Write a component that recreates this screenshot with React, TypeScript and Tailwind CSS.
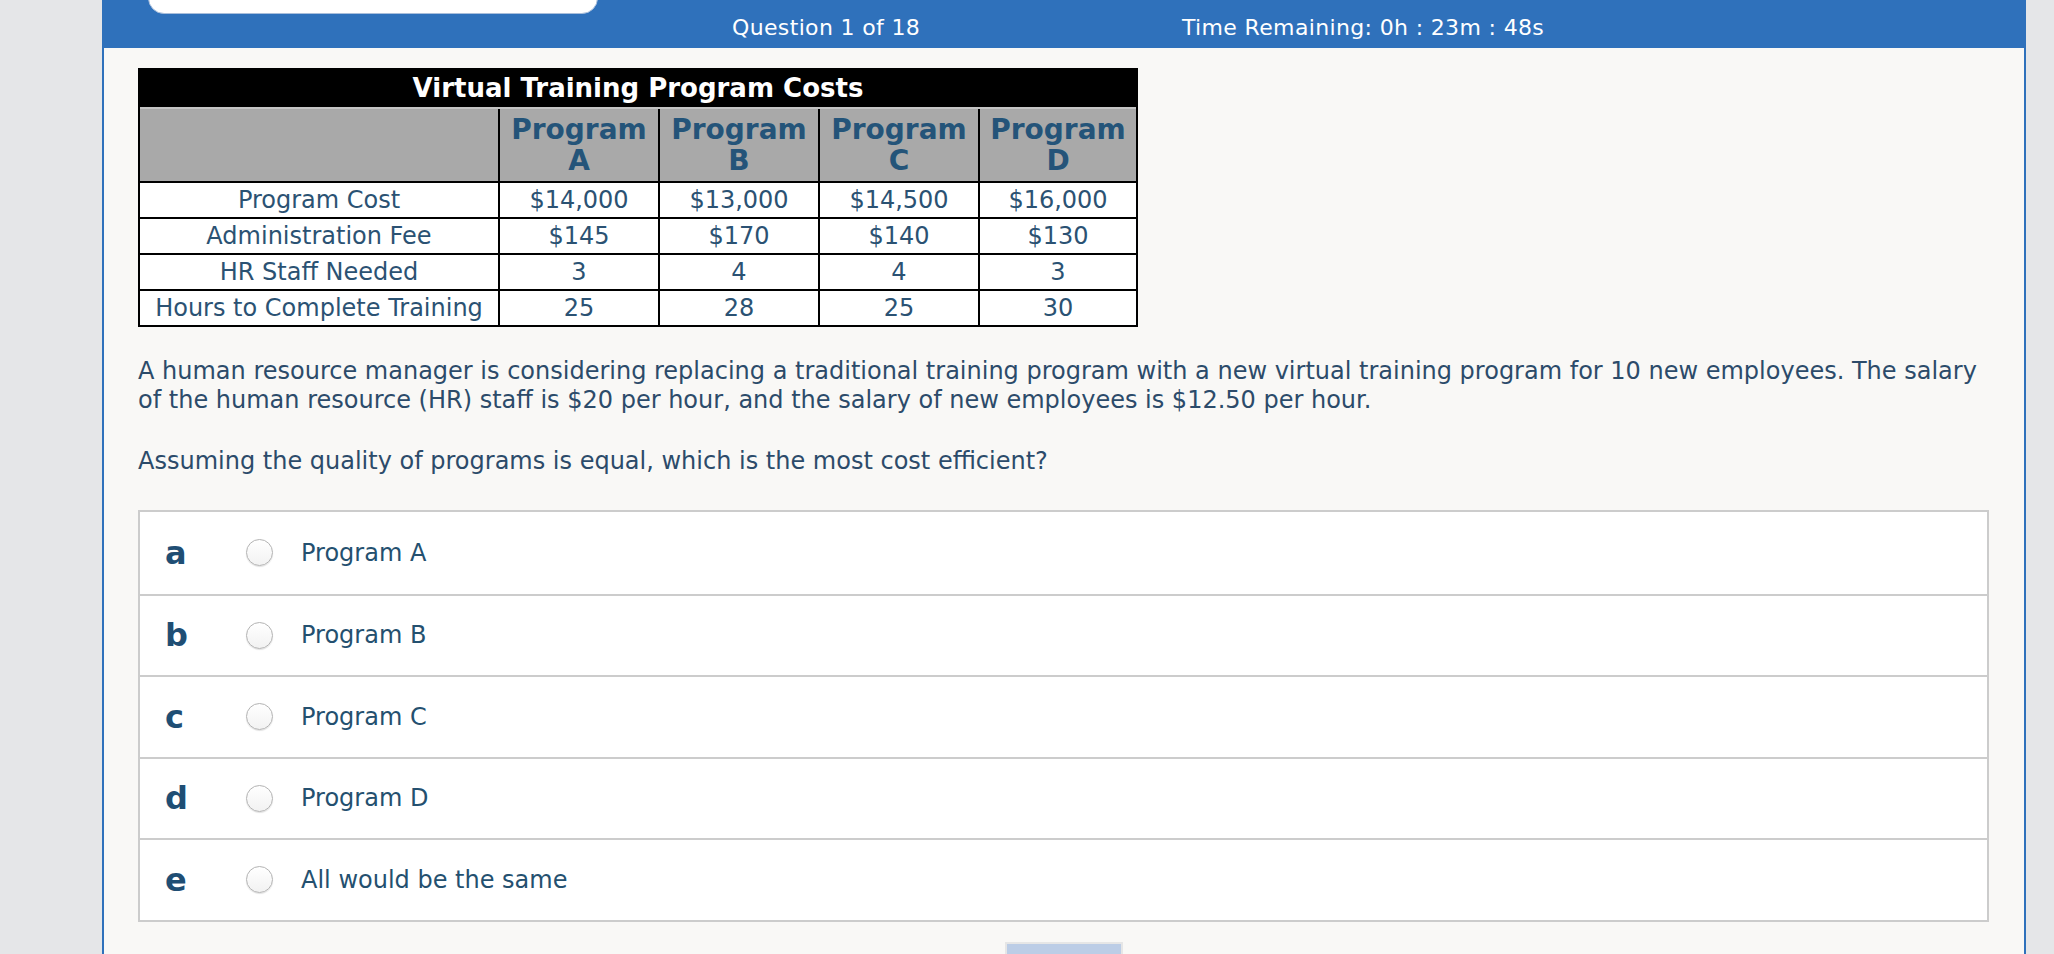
import { Fragment } from 'react';

const programs = ['A', 'B', 'C', 'D'];

const rows = [
    { label: 'Program Cost', values: ['$14,000', '$13,000', '$14,500', '$16,000'] },
    { label: 'Administration Fee', values: ['$145', '$170', '$140', '$130'] },
    { label: 'HR Staff Needed', values: ['3', '4', '4', '3'] },
    { label: 'Hours to Complete Training', values: ['25', '28', '25', '30'] },
];

const options = [
    { key: 'a', text: 'Program A' },
    { key: 'b', text: 'Program B' },
    { key: 'c', text: 'Program C' },
    { key: 'd', text: 'Program D' },
    { key: 'e', text: 'All would be the same' },
];

function CostTable() {
    return (
        <div className="w-[1000px] border-2 border-black bg-black">
            <div className="h-[37px] text-center text-[26px] font-bold leading-[37px] text-white">
                Virtual Training Program Costs
            </div>
            <div className="h-[2px] bg-[#c4c4c4]" />
            <div className="grid grid-cols-[358px_158px_158px_158px_156px] gap-[2px]">
                <div className="h-[72px] bg-[#a9a9a9]" />
                {programs.map((p) => (
                    <div
                        key={p}
                        className="flex h-[72px] flex-col items-center justify-center bg-[#a9a9a9] text-[28px] font-bold leading-[31px] text-[#245479]"
                    >
                        <span>Program</span>
                        <span>{p}</span>
                    </div>
                ))}
                {rows.map((row) => (
                    <Fragment key={row.label}>
                        <div className="h-[34px] bg-white text-center text-[24px] leading-[34px] text-[#2b5273]">
                            {row.label}
                        </div>
                        {row.values.map((v, i) => (
                            <div
                                key={i}
                                className="h-[34px] bg-white text-center text-[24px] leading-[34px] text-[#2b5273]"
                            >
                                {v}
                            </div>
                        ))}
                    </Fragment>
                ))}
            </div>
        </div>
    );
}

function Radio() {
    return (
        <div className="h-[27px] w-[27px] shrink-0 rounded-full border border-[#b3b3b3] bg-gradient-to-b from-white to-[#f2f2f2] shadow-[0_1px_1px_rgba(0,0,0,0.12)]" />
    );
}

export default function App() {
    return (
        <div className="flex h-[954px] w-[2054px] overflow-hidden bg-[#e5e6e8] font-['Verdana','DejaVu_Sans',sans-serif]">
            <div className="w-[102px] shrink-0" />

            <div className="flex w-[1924px] shrink-0 flex-col border-x-2 border-[#2f71bb] bg-[#f9f8f6]">
                {/* Top bar */}
                <div className="relative flex h-[48px] shrink-0 bg-[#2f71bb] pt-[15px] text-[22px] leading-[26px] tracking-[0.35px] text-white">
                    <div className="absolute left-[44px] top-[-26px] h-[40px] w-[450px] rounded-[16px] border border-[#a9bedb] bg-white" />
                    <span className="ml-[628px] w-[450px]">Question 1 of 18</span>
                    <span>Time Remaining: 0h : 23m : 48s</span>
                </div>

                {/* Question body */}
                <div className="flex flex-col pl-[34px] pr-[35px] pt-[20px]">
                    <CostTable />

                    <p className="mt-[30px] text-[24px] leading-[29px] text-[#2c4b6a]">
                        A human resource manager is considering replacing a traditional training program with a
                        new virtual training program for 10 new employees. The salary of the human resource (HR)
                        staff is $20 per hour, and the salary of new employees is $12.50 per hour.
                    </p>
                    <p className="mt-[32px] text-[24px] leading-[29px] text-[#2c4b6a]">
                        Assuming the quality of programs is equal, which is the most cost efficient?
                    </p>

                    <div className="mt-[34px] border-2 border-[#cccccc] bg-white">
                        {options.map((o, i) => (
                            <div
                                key={o.key}
                                className={`flex h-[81.5px] items-center pl-[25px] ${i > 0 ? 'border-t-2 border-[#cccccc]' : ''}`}
                            >
                                <span className="w-[81px] text-[32px] font-bold leading-none text-[#1f4e74]">{o.key}</span>
                                <Radio />
                                <span className="ml-[28px] text-[24px] text-[#24506f]">{o.text}</span>
                            </div>
                        ))}
                    </div>

                    <div className="mt-[20px] flex justify-center">
                        <div className="h-[40px] w-[118px] border-2 border-[#e6e6e6] bg-[#bccde6]" />
                    </div>
                </div>
            </div>
        </div>
    );
}
